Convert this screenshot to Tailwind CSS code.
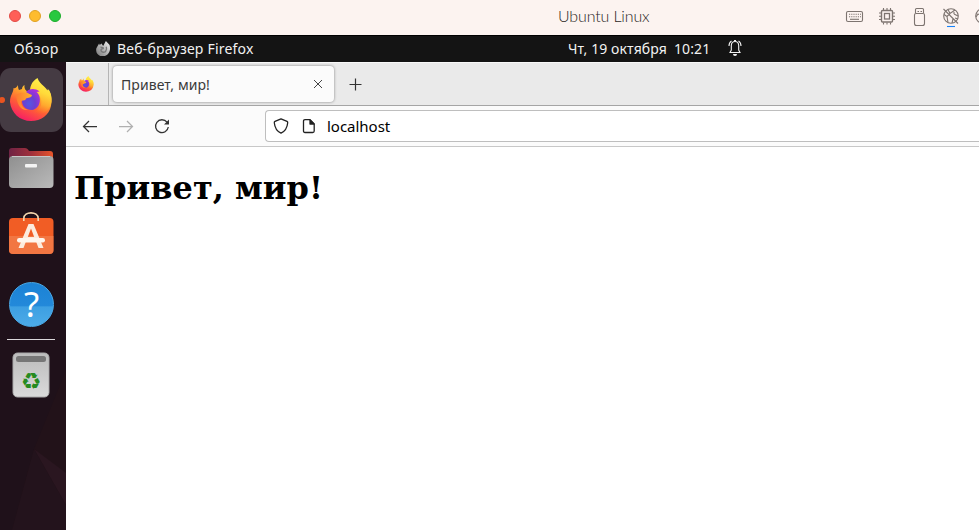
<!DOCTYPE html>
<html lang="ru"><head><meta charset="utf-8"><title>Привет, мир!</title>
<script src="https://cdn.jsdelivr.net/npm/@tailwindcss/browser@4"></script></head>
<body class="w-[979px] h-[530px] overflow-hidden bg-white font-['Noto_Sans',sans-serif]">
<svg class="absolute w-0 h-0" aria-hidden="true">
<defs>
<linearGradient id="fire" x1=".8" y1="0" x2=".25" y2="1"><stop offset="0" stop-color="#fff44f"/><stop offset=".3" stop-color="#ffb02c"/><stop offset=".6" stop-color="#ff6035"/><stop offset="1" stop-color="#f5156c"/></linearGradient>
<linearGradient id="side" x1=".7" y1="0" x2=".45" y2="1"><stop offset="0" stop-color="#fff64f"/><stop offset=".4" stop-color="#ffda3a"/><stop offset=".7" stop-color="#ffa92e"/><stop offset="1" stop-color="#ff6a25" stop-opacity="0"/></linearGradient>
<radialGradient id="globe" cx=".4" cy=".7" r=".7"><stop offset="0" stop-color="#5556e4"/><stop offset=".5" stop-color="#6c3fd0"/><stop offset="1" stop-color="#a82fdc"/></radialGradient>
<linearGradient id="ear" x1="0" y1="0" x2="1" y2="0"><stop offset="0" stop-color="#ff7a30"/><stop offset="1" stop-color="#ffb02e"/></linearGradient>
<linearGradient id="gray" x1="1" y1="0" x2="0" y2="1"><stop offset="0" stop-color="#f2f2f2"/><stop offset="1" stop-color="#777"/></linearGradient>
<linearGradient id="back" x1="0" y1="0" x2="1" y2="0"><stop offset="0" stop-color="#6f2344"/><stop offset=".5" stop-color="#a0303c"/><stop offset="1" stop-color="#e8542a"/></linearGradient>
<linearGradient id="front" x1="0" y1="0" x2="1" y2="1"><stop offset="0" stop-color="#8f8f8f"/><stop offset="1" stop-color="#bababa"/></linearGradient>
<linearGradient id="bin" x1="0" y1="0" x2="0" y2="1"><stop offset="0" stop-color="#bcbcbc"/><stop offset="1" stop-color="#dadada"/></linearGradient>
</defs>
<symbol id="firefox" viewBox="0 0 42 44">
<path fill="url(#fire)" d="M8 7C8 10 8.500 11 9 12L12 11C12 9 13 8 14.500 7C14 11 16 13 19 14L31 13L39 12C42 17 42 22 41 28C39 37 31 43 21 43C10 43 1 35 0 24C0 17 3.500 15 3.500 10C5 11 7 9 8 7Z"/>
<path fill="url(#side)" d="M27.500 0C21 4 20 9 20 14C28 13 33 20 31 27C29 32 26 34 19 36C32 39 40 33 41.500 24C42 19 40 13 37.500 10.500C38 12 38 13 38 14C37 9 30 7 27.500 0Z"/>
<path fill="url(#globe)" d="M16 14C19 10.500 25 10 29.500 13.500L26.500 14C32 18 31 31 22 32C16 32 11.500 28 12 22C13 20 19 20 21 17Z"/>
<path fill="url(#ear)" d="M6 17C11 13 17 15 22 17C21.500 20 18 19.500 16 20.500C16 22 14 22.500 11 23C11 28 14 31 18 32C11 33 7 27 6 17Z"/>
</symbol>
</svg>

<header class="relative flex h-[35px] items-start bg-[#fcf3f0]">
 <div class="flex gap-2 pl-[9px] pt-[10px]">
  <span class="size-3 rounded-full border border-[#e24b46] bg-[#ff5f57]"></span>
  <span class="size-3 rounded-full border border-[#dfa123] bg-[#febc2e]"></span>
  <span class="size-3 rounded-full border border-[#1dad2b] bg-[#28c840]"></span>
 </div>
 <h2 class="ml-[497px] w-[100px] pt-[5px] font-[Lato,sans-serif] text-[16px] leading-[21px] font-light tracking-[-0.14px] whitespace-nowrap text-[#2b2624]">Ubuntu Linux</h2>
 <svg class="ml-auto h-[35px] w-[139px] shrink-0" viewBox="840 0 139 35" fill="none" stroke="#7d7470" stroke-width="1.1">
  <rect x="846.5" y="11.5" width="16" height="10" rx="1.5"/><path stroke-dasharray="1.2 1" d="M849 14.3h12M849 16.7h12"/><path d="M850 19.3h9"/>
  <rect x="881.5" y="10.500" width="11" height="11.500" rx="1" stroke-width="1.400"/><rect x="884.5" y="13.500" width="5" height="5.500" stroke-width="1.300"/><path d="M883.5 8v2M887 8v2M890.500 8v2M883.500 22.500v2M887 22.500v2M890.500 22.500v2M879 13h2M879 16.300h2M879 19.500h2M893 13h2M893 16.300h2M893 19.500h2"/>
  <path d="M915.500 13V9.500q0-1 1-1h6q1 0 1 1V13M916 13.500q-1.500 0-1.500 1.500v8.500q0 2 2 2h6q2 0 2-2V15q0-1.500-1.500-1.500z"/><path d="M917.500 11.500h1.500M920.500 11.500h1.500"/>
  <circle cx="951" cy="16" r="7.300"/><path d="M943.500 9l14.500 14.500M948 9.500l2 4 5-3.500M950 13.500l-3 3-3-2M947 16.500l1 6M954 14l4 2M954 14l0-4M955 18l3 1M952 23l1-4"/>
  <path stroke="#1683fb" d="M947 26.500h8"/>
  <circle cx="983" cy="16" r="7.300"/><path d="M976 17l2-3 2 1"/>
 </svg>
</header>

<nav class="relative flex h-[27px] items-center border-t border-black bg-[#141414] text-[14px] leading-[20px] text-[#f2f2f2]">
 <span class="ml-[14px] w-[82px] tracking-[0.42px]">Обзор</span>
 <svg class="h-[15px] w-[15px] -translate-y-px" viewBox="0 0 42 44"><path fill="url(#gray)" d="M8 7L10 12L15 7L20 15L28 0L39 12C49 54-7 55 0 21Z"/><path d="M12 18Q22 19 20 22Q12 23 14 29Q18 36 27 31Q32 25 29 17" fill="none" stroke="#777" stroke-width="4"/></svg>
 <span class="ml-[6px] w-[451px] tracking-[0.2px] whitespace-nowrap">Веб-браузер Firefox</span>
 <span class="flex w-[160px] whitespace-nowrap"><span class="w-[106px] tracking-[0.1px]">Чт, 19 октября</span><span class="tracking-[0.1px]">10:21</span></span>
 <svg class="h-[18px] w-[14px] -translate-y-px" viewBox="0 0 14 18" fill="none" stroke="#f2f2f2" stroke-width="1.100"><path d="M2 13.500L3.300 11V6.500Q3.500 2.500 7 2.500T10.700 6.500V11L12 13.500ZM1 7Q1 3.500 3.500 2M13 7Q13 3.500 10.500 2M6 1.500h2"/><path fill="#f2f2f2" stroke="none" d="M5 15h4q0 2-2 2t-2-2"/></svg>
</nav>

<div class="flex h-[468px]">
 <aside class="relative flex w-[66px] shrink-0 flex-col bg-[#1f111a]">
  <svg class="absolute inset-0 h-[468px] w-[66px]" viewBox="0 62 66 468"><path fill="#221219" d="M22 395L34 449L66 370V530H12L34 449Z"/><path fill="#2a1620" d="M34 449L66 473V505Z"/><path fill="#23131c" d="M34 449L66 505V530H12Z"/></svg>
  <div class="relative mt-[6px] flex h-16 w-[63px] items-center rounded-[11px] bg-[#453b43] pl-[10px]">
   <span class="absolute -left-px top-[29px] h-[6px] w-[6px] rounded-full bg-[#e95420]"></span>
   <svg class="h-[44px] w-[42px]"><use href="#firefox"/></svg>
  </div>
  <svg class="relative mt-[15px] ml-2 h-[43px] w-[46px]" viewBox="8 147 46 43"><path fill="url(#back)" d="M9 151q0-3 3-3h13q2 0 3 1.500l1 1.500h21q3 0 3 3v10H9z"/><rect x="9" y="156" width="44.500" height="32" rx="4" fill="url(#front)"/><path stroke="#c8c8c8" d="M12 156.500h38"/><rect x="25" y="164" width="12" height="3.500" rx="1" fill="#f4f4f4"/></svg>
  <svg class="relative mt-[21px] ml-2 h-[45px] w-[46px]" viewBox="8 211 46 45"><rect x="9" y="218" width="44.500" height="36" rx="4" fill="#f15d25"/><path fill="#f2824f" fill-opacity=".7" d="M9 236h44.500v14q0 4-4 4H13q-4 0-4-4z"/><path fill="none" stroke="#f4d7ae" stroke-width="1.600" d="M23.800 221v-2.500c0-7.500 14.400-7.500 14.400 0v2.500"/><path fill="#fcebdd" fill-rule="evenodd" d="M28.500 224H33.500L43.500 248H38.500L35.500 240H26.500L23.500 248H18.500ZM31 228.500L27.800 237H34.200Z"/><rect x="17" y="238" width="28" height="4.500" rx="2.200" fill="#fff5ec"/></svg>
  <div class="relative mt-[26px] ml-[9px] flex size-[45px] items-center justify-center rounded-full border border-[#49a8e5] bg-[linear-gradient(#1c83d6_0_5%,#2389da_54%,#3d9fe2_55%,#4cabe8)] font-['Noto_Sans',sans-serif] text-[35px] leading-[40px] text-white"><span class="-mt-px">?</span></div>
  <div class="relative mt-[12px] ml-[7px] h-px w-12 bg-[#dbd8da]"></div>
  <div class="relative mt-[12px] ml-3 h-[46px] w-[38px]">
   <svg class="absolute inset-0 h-[46px] w-[38px]" viewBox="0 0 38 46"><rect x="1" y="1" width="36" height="44" rx="4.500" fill="url(#bin)" stroke="#aaa"/><rect x="4" y="4" width="30" height="6" rx="2.500" fill="#777"/></svg>
   <span class="absolute top-[16px] left-0 w-[38px] text-center font-['DejaVu_Sans',sans-serif] text-[23px] leading-[26px] text-[#268b20]">♻</span>
  </div>
 </aside>

 <main class="flex min-w-0 flex-1 flex-col">
  <div class="flex h-[44px] border-t border-b border-t-[#f8f8f8] border-b-[#a5a5a5] bg-[#eaeaea]">
   <div class="flex w-[43px] items-center border-r border-[#b5b5b5] pl-[12px]"><svg class="h-[16px] w-[16px]"><use href="#firefox"/></svg></div>
   <div class="mt-[3px] ml-[4px] flex h-[36px] w-[221px] items-center rounded-[4px] bg-[#fbfbfb] pl-[8px] shadow-[0_0_3px_rgba(0,0,0,.45)]">
    <span class="w-[193px] text-[14px] tracking-[0.08px] whitespace-nowrap text-[#3a3a3a]">Привет, мир!</span>
    <svg class="size-[8px]" viewBox="0 0 8 8"><path d="M0 0L8 8M8 0L0 8" stroke="#444" fill="none"/></svg>
   </div>
   <svg class="mt-[15px] ml-[15px] size-[13px]" viewBox="0 0 13 13"><path d="M6.500 .5V12.500M.5 6.500H12.500" stroke="#333" stroke-width="1.200"/></svg>
  </div>
  <div class="flex h-[41px] items-center border-b border-[#c8c8c8] bg-[#fbfbfb]">
   <svg class="ml-[16px] h-[16px] w-[16px]" viewBox="0 0 16 16" fill="none" stroke="#333" stroke-width="1.250"><path d="M15 8.500H1.500M7 3L1.500 8.500 7 14"/></svg>
   <svg class="ml-[20px] h-[16px] w-[16px]" viewBox="0 0 16 16" fill="none" stroke="#b0b0b0" stroke-width="1.250"><path d="M1 8.500H14.500M9 3l5.500 5.500L9 14"/></svg>
   <svg class="ml-[20px] h-[16px] w-[16px]" viewBox="0 0 16 16" fill="none" stroke="#333" stroke-width="1.300"><path d="M13 4.200A6.400 6.400 0 1 0 14.300 9"/><path fill="#333" stroke="none" d="M15 1.500v5H10z"/></svg>
   <div class="ml-[95px] flex h-[32px] flex-1 items-center rounded-l-[4px] border border-r-0 border-[#bebebe] bg-white">
    <svg class="ml-[7px] h-[16px] w-[16px]" viewBox="0 0 16 16" fill="none" stroke="#222" stroke-width="1.300" stroke-linejoin="round"><path d="M8 .8L14 3.300q.8.400.7 1.500Q14 12.500 8 15.200 2 12.500 1.300 4.800 1.200 3.700 2 3.300Z"/></svg>
    <svg class="ml-[13px] h-[16px] w-[14px]" viewBox="0 0 14 16" fill="none" stroke="#222" stroke-width="1.300" stroke-linejoin="round"><path d="M3 1.700H8L12.200 6v7q0 1.500-1.500 1.500H3Q1.500 14.500 1.500 13V3.200Q1.500 1.700 3 1.700Z"/><path fill="#222" d="M8 2v4h4z"/></svg>
    <span class="ml-[11px] text-[15px] leading-[20px] tracking-[-0.02px] text-black">localhost</span>
   </div>
  </div>
  <article class="flex-1 bg-white pt-[23px] pl-[8px]"><h1 class="font-['DejaVu_Serif',serif] text-[32px] leading-[37px] font-bold whitespace-nowrap text-black">Привет, мир!</h1></article>
 </main>
</div>
</body></html>
